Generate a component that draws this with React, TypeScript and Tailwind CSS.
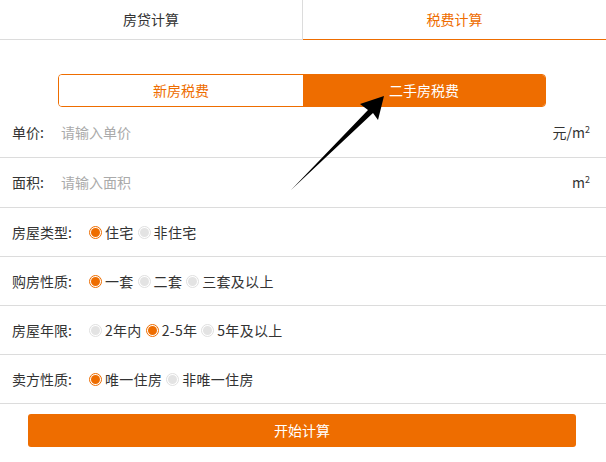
const font = { fontFamily: '"Microsoft YaHei", "Noto Sans CJK SC", "Noto Sans", sans-serif' };

function Radio({ checked, label }: { checked?: boolean; label: string }) {
  return (
    <span className="flex items-center mr-[4px]">
      {checked ? (
        <span className="w-[13px] h-[13px] rounded-full border border-[#ee6d00] flex items-center justify-center">
          <span className="w-[9px] h-[9px] rounded-full bg-[#ee6d00]" />
        </span>
      ) : (
        <span className="w-[13px] h-[13px] rounded-full border border-[#e0e0e0] flex items-center justify-center">
          <span className="w-[9px] h-[9px] rounded-full bg-[#e3e3e3]" />
        </span>
      )}
      <span className="ml-[3px] text-[14px] text-[#333] tracking-[0.3px]">{label}</span>
    </span>
  );
}

function Sq() {
  return (
    <span>
      m<sup className="text-[9px] -top-[5px]">2</sup>
    </span>
  );
}

function InputRow({ label, placeholder, unit, h }: { label: string; placeholder: string; unit: React.ReactNode; h: string }) {
  return (
    <div className={`${h} border-b border-[#dcdcdc] flex items-center pl-[12px] pr-[16px]`}>
      <span className="w-[49px] text-[14px] text-[#333]">{label}</span>
      <span className="flex-1 text-[14px] text-[#aaa]">{placeholder}</span>
      <span className="text-[14px] text-[#333]">{unit}</span>
    </div>
  );
}

function RadioRow({ label, options, active }: { label: string; options: string[]; active: number }) {
  return (
    <div className="h-[49px] border-b border-[#dcdcdc] flex items-center pl-[12px]">
      <span className="w-[77px] text-[14px] text-[#333]">{label}</span>
      {options.map((o, i) => (
        <Radio key={o} label={o} checked={i === active} />
      ))}
    </div>
  );
}

export default function App() {
  return (
    <div className="relative w-[606px] h-[462px] bg-white overflow-hidden" style={font}>
      <div className="flex h-[40px] border-b border-[#dcdcdc]">
        <div className="w-[303px] border-r border-[#dcdcdc] flex items-center justify-center text-[14px] text-[#333]">
          房贷计算
        </div>
        <div className="flex-1 flex items-center justify-center text-[14px] text-[#ee6d00] border-b border-[#ee6d00] -mb-px">
          税费计算
        </div>
      </div>

      <div className="pt-[34px] pl-[58px]">
        <div className="flex w-[488px] h-[33px] border border-[#ee6d00] rounded-[4px] overflow-hidden text-[14px]">
          <div className="w-[244px] flex items-center justify-center text-[#ee6d00] bg-white">新房税费</div>
          <div className="flex-1 flex items-center justify-center text-white bg-[#ee6d00]">二手房税费</div>
        </div>
      </div>

      <InputRow
        h="h-[51px]"
        label="单价:"
        placeholder="请输入单价"
        unit={
          <>
            元/<Sq />
          </>
        }
      />
      <InputRow h="h-[50px]" label="面积:" placeholder="请输入面积" unit={<Sq />} />
      <RadioRow label="房屋类型:" options={["住宅", "非住宅"]} active={0} />
      <RadioRow label="购房性质:" options={["一套", "二套", "三套及以上"]} active={0} />
      <RadioRow label="房屋年限:" options={["2年内", "2-5年", "5年及以上"]} active={1} />
      <RadioRow label="卖方性质:" options={["唯一住房", "非唯一住房"]} active={0} />

      <div className="pl-[28px] pr-[30px] pt-[10px]">
        <button className="w-full h-[33px] rounded-[3px] bg-[#ee6d00] text-white text-[14px]">开始计算</button>
      </div>

      <svg className="absolute left-0 top-0 pointer-events-none" width="606" height="462">
        <polygon points="384,96 360,104 368,110 291,190 373,113 378,120" fill="#000" />
      </svg>
    </div>
  );
}
